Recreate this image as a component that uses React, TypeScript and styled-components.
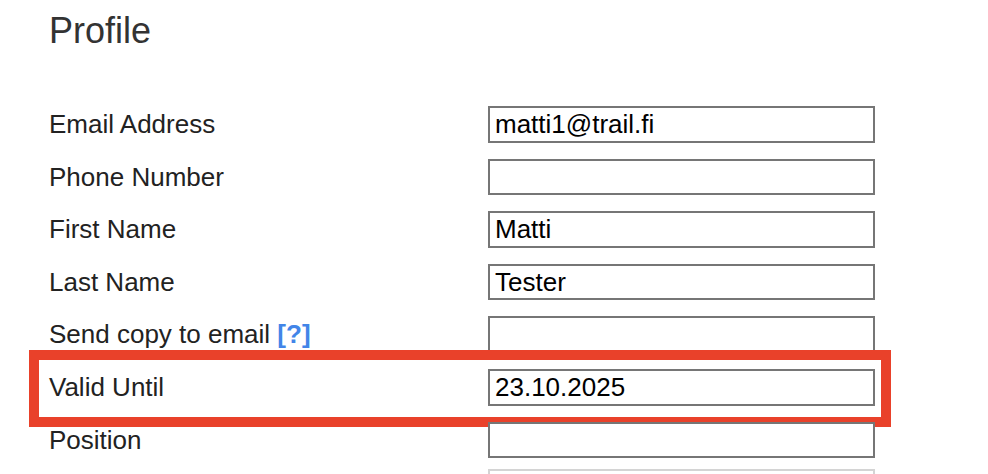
import React, { FC } from "react";
import styled, { createGlobalStyle } from "styled-components";

const GlobalStyle = createGlobalStyle`
  body {
    margin: 0;
    background: #fff;
    font-family: "Liberation Sans", Arial, Helvetica, sans-serif;
  }
`;

const Page = styled.div`
  padding-left: 49px;
  overflow: hidden;
  height: 474px;
`;

const Title = styled.h1`
  margin: 11px 0 0;
  font-size: 36px;
  font-weight: 400;
  line-height: 40px;
  color: #333;
`;

const Form = styled.form`
  margin-top: 55px;
  display: flex;
  flex-direction: column;
  align-items: flex-start;
  gap: 16px;
`;

const Row = styled.div<{ $tight?: boolean }>`
  position: relative;
  display: grid;
  grid-template-columns: 439px 387px;
  align-items: center;
  height: 36.6px;
  margin-top: ${({ $tight }) => ($tight ? "-5px" : "0")};
`;

const Label = styled.label`
  font-size: 26px;
  line-height: 36.6px;
  color: #222;
`;

const Help = styled.a`
  color: #4285e8;
  font-weight: 700;
  text-decoration: none;
`;

const Field = styled.input<{ $muted?: boolean }>`
  box-sizing: border-box;
  width: 387px;
  height: 36.6px;
  margin: 0;
  padding: 0 5px;
  border: 2px solid ${({ $muted }) => ($muted ? "#d4d4d4" : "#767676")};
  border-radius: 0;
  background: #fff;
  font-family: "Liberation Sans", Arial, Helvetica, sans-serif;
  font-size: 26px;
  color: #000;
  outline: none;
`;

const Highlight = styled.div`
  position: absolute;
  left: -20px;
  right: -16px;
  top: -19px;
  bottom: -21px;
  border: 10px solid #e9412a;
  pointer-events: none;
`;

interface FieldDef {
  label: React.ReactNode;
  value: string;
  marked?: boolean;
}

const fields: FieldDef[] = [
  { label: "Email Address", value: "matti1@trail.fi" },
  { label: "Phone Number", value: "" },
  { label: "First Name", value: "Matti" },
  { label: "Last Name", value: "Tester" },
  {
    label: (
      <>
        Send copy to email <Help href="#">[?]</Help>
      </>
    ),
    value: ""
  },
  { label: "Valid Until", value: "23.10.2025", marked: true },
  { label: "Position", value: "" }
];

const App: FC = () => {
  return (
    <>
      <GlobalStyle />
      <Page>
        <Title>Profile</Title>
        <Form>
          {fields.map((f, i) => (
            <Row key={i}>
              <Label>{f.label}</Label>
              <Field type="text" defaultValue={f.value} />
              {f.marked && <Highlight />}
            </Row>
          ))}
          <Row $tight>
            <Label />
            <Field type="text" $muted disabled />
          </Row>
        </Form>
      </Page>
    </>
  );
};

export default App;
